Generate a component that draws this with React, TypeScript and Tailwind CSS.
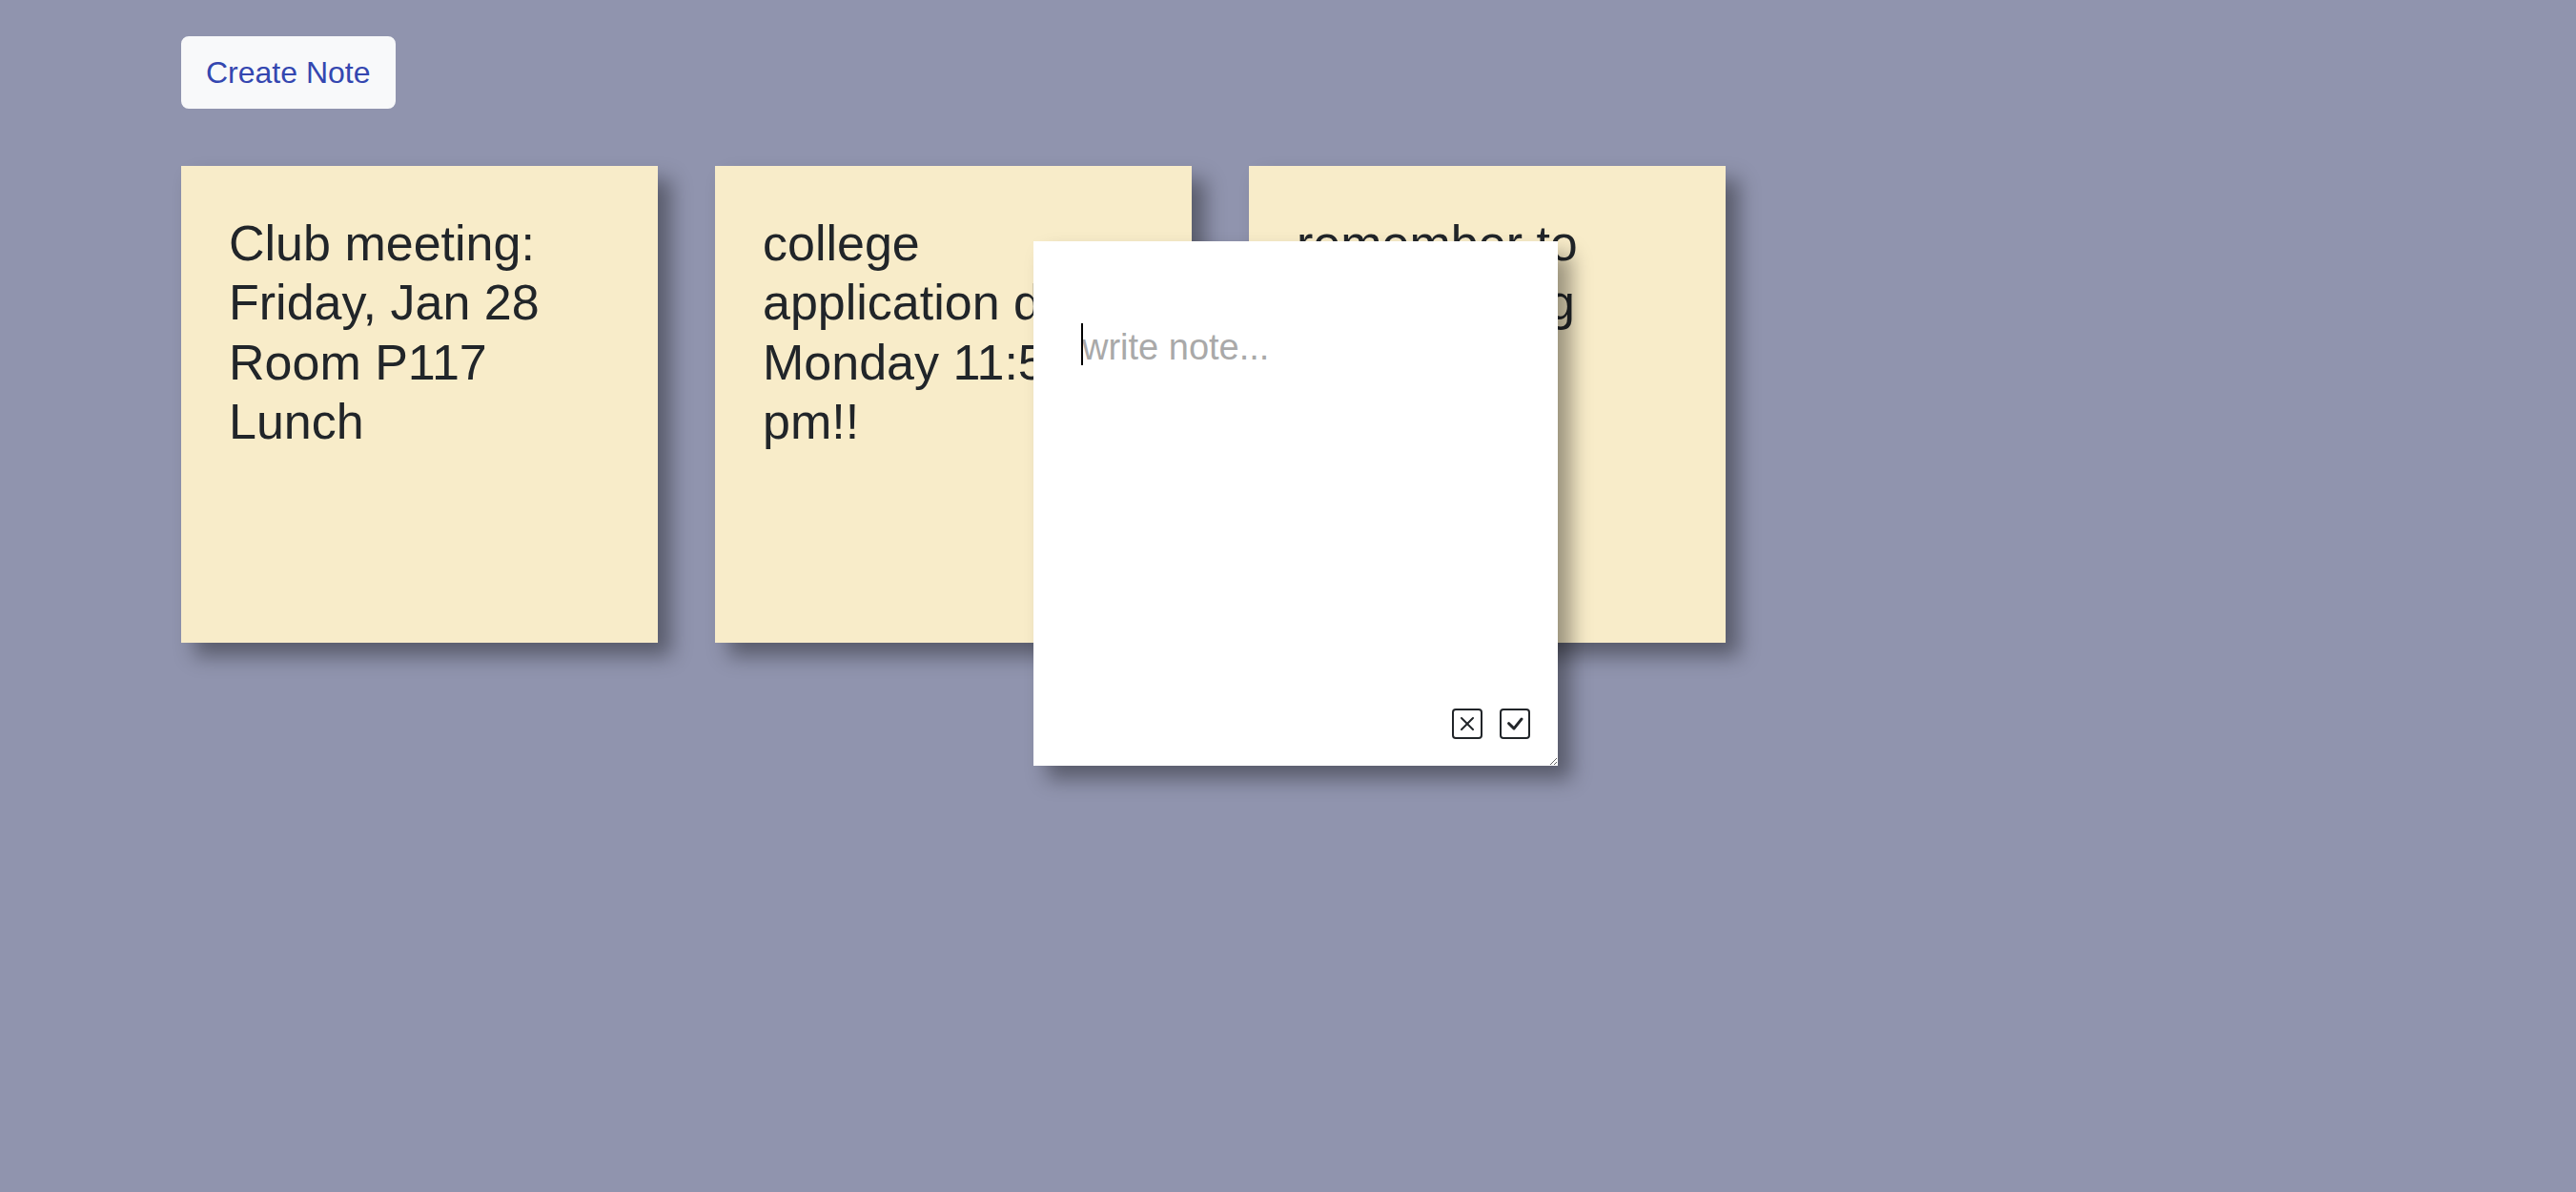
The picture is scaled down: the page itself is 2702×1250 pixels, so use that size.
import React, { useState } from 'react';
import { BsXSquare, BsCheckSquare } from 'react-icons/bs';

type Note = { id: number; text: string };

const initialNotes: Note[] = [
  { id: 1, text: 'Club meeting:\nFriday, Jan 28\nRoom P117\nLunch' },
  { id: 2, text: 'college application due Monday 11:59 pm!!' },
  { id: 3, text: 'remember to walk the dog' },
];

const NoteCard: React.FC<{ note: Note }> = ({ note }) => (
  <div className="w-[500px] h-[500px] shrink-0 bg-[#f8ecc9] p-[50px] shadow-[14px_14px_20px_rgba(0,0,0,0.38)]">
    <p className="text-[52px] leading-[1.2] text-[#212529] whitespace-pre-line break-words">{note.text}</p>
  </div>
);

export default function App() {
  const [notes, setNotes] = useState<Note[]>(initialNotes);
  const [draft, setDraft] = useState('');
  const [editing, setEditing] = useState(true);

  const save = () => {
    if (!draft.trim()) return;
    setNotes([...notes, { id: Date.now(), text: draft }]);
    setDraft('');
    setEditing(false);
  };

  return (
    <div className="relative min-h-[1250px] bg-[#9094ae] pl-[190px] pt-[38px] font-['Liberation_Sans',Arial,Helvetica,sans-serif]">
      <button
        type="button"
        onClick={() => setEditing(true)}
        className="h-[76px] px-[24px] rounded-[8px] border-2 border-[#f8f9fa] bg-[#f8f9fa] text-[32px] leading-[1.5] text-[#3447b0]"
      >
        Create Note
      </button>

      <div className="mt-[60px] flex gap-[60px]">
        {notes.map((n) => (
          <NoteCard key={n.id} note={n} />
        ))}
      </div>

      {editing && (
        <div className="absolute left-[1084px] top-[253px] w-[550px] h-[550px] shadow-[14px_14px_20px_rgba(0,0,0,0.38)]">
          <textarea
            autoFocus
            value={draft}
            onChange={(e) => setDraft(e.target.value)}
            placeholder="write note..."
            className="block w-[550px] h-[550px] resize bg-white pt-[83px] px-[51px] text-[38px] text-[#212529] caret-black outline-none placeholder:text-[#a9a9a9] font-['Liberation_Sans',Arial,sans-serif]"
          />
          {/* caret shown while the note is still empty */}
          {draft === '' && (
            <span className="pointer-events-none absolute left-[50px] top-[86px] w-[2px] h-[44px] bg-black" />
          )}
          <div className="absolute right-[29px] bottom-[28px] flex gap-[18px] text-[#212529]">
            <button type="button" onClick={() => { setDraft(''); setEditing(false); }}>
              <BsXSquare size={32} />
            </button>
            <button type="button" onClick={save}>
              <BsCheckSquare size={32} />
            </button>
          </div>
        </div>
      )}
    </div>
  );
}
